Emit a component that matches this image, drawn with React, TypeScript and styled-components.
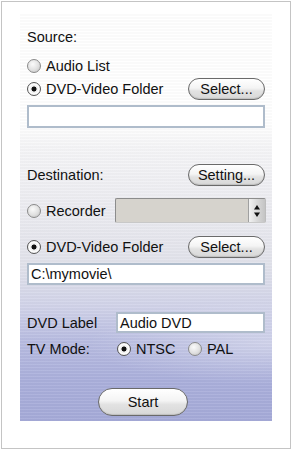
import React from "react";
import styled, { createGlobalStyle } from "styled-components";

const Global = createGlobalStyle`
  html, body { margin: 0; padding: 0; background: #fff; }
  body { font-family: "Liberation Sans", Arial, sans-serif; }
`;

const Outer = styled.div`
  width: 292px;
  height: 451px;
  padding: 1px;
  box-sizing: border-box;
`;

const Frame = styled.div`
  width: 290px;
  height: 448px;
  box-sizing: border-box;
  border: 1px solid #c4c4c4;
  padding: 11px 0 0 18px;
`;

const Panel = styled.div`
  width: 252px;
  height: 408px;
  box-sizing: border-box;
  padding: 16px 7px 0 7px;
  display: flex;
  flex-direction: column;
  background:
    repeating-linear-gradient(180deg, rgba(255,255,255,0.08) 0 1px, rgba(0,0,0,0.02) 1px 3px),
    radial-gradient(ellipse 260px 60px at 250px 330px, rgba(255,255,255,0.35), rgba(255,255,255,0) 70%),
    linear-gradient(180deg, #ffffff 0%, #ffffff 27%, #f5f5f7 33%, #ececf1 48%, #e1e2eb 62%, #d1d3e9 72%, #b9bde1 80%, #aaafdb 90%, #a5aad8 100%);
`;

const Row = styled.div<{ $mt: number; $h: number }>`
  display: flex;
  align-items: center;
  margin-top: ${(p) => p.$mt}px;
  height: ${(p) => p.$h}px;
  font-size: 14.5px;
  color: #111;
  white-space: nowrap;
`;

const Label = styled.span<{ $w?: number }>`
  ${(p) => (p.$w ? `width: ${p.$w}px;` : "")}
  flex: ${(p) => (p.$w ? "none" : "1")};
`;

const RadioWrap = styled.label<{ $w?: number }>`
  display: flex;
  align-items: center;
  gap: 5px;
  ${(p) => (p.$w ? `width: ${p.$w}px; flex: none;` : "flex: 1;")}
`;

const Dot = styled.span<{ $on?: boolean }>`
  width: 12px;
  height: 12px;
  border-radius: 50%;
  border: 1px solid ${(p) => (p.$on ? "#555" : "#8a8a8a")};
  background: ${(p) =>
    p.$on
      ? "radial-gradient(circle at 50% 50%, #111 0 2.2px, #e8e8e8 2.8px, #ffffff 5px, #d0d0d0 100%)"
      : "radial-gradient(circle at 40% 35%, #fafafa 0%, #e0e0e0 55%, #bdbdbd 100%)"};
  flex: none;
`;

const Button = styled.button<{ $w: number; $h: number }>`
  width: ${(p) => p.$w}px;
  height: ${(p) => p.$h}px;
  border: 1px solid #6a6a6a;
  border-radius: ${(p) => p.$h / 2}px;
  background: linear-gradient(180deg, #ffffff 0%, #f4f4f4 45%, #e2e2e2 60%, #d8d8d8 100%);
  box-shadow: inset 0 -1px 1px rgba(0,0,0,0.12);
  font-family: "Liberation Sans", Arial, sans-serif;
  font-size: 14.5px;
  color: #111;
  padding: 0;
  flex: none;
`;

const TextBox = styled.div<{ $w: number; $h: number }>`
  width: ${(p) => p.$w}px;
  height: ${(p) => p.$h}px;
  box-sizing: border-box;
  border: 2px solid #afbccb;
  background: #fff;
  font-size: 14.5px;
  padding-left: 2px;
  display: flex;
  align-items: center;
  color: #111;
  flex: none;
`;

const Combo = styled.div`
  width: 151px;
  height: 25px;
  box-sizing: border-box;
  border: 1px solid #8c8c8c;
  border-right-color: #bdbdbd;
  border-bottom-color: #c8c8c8;
  background: #d6d3cd;
  display: flex;
  justify-content: flex-end;
  border-radius: 2px;
  flex: none;
`;

const Spin = styled.div`
  width: 16px;
  height: 100%;
  background: linear-gradient(90deg, #f2f2f2, #d9d9d9 50%, #c4c4c4);
  border-left: 1px solid #a0a0a0;
  display: flex;
  align-items: center;
  justify-content: center;
`;

const StartRow = styled(Row)`
  padding-left: 71px;
`;

export default function App() {
  return (
    <Outer>
      <Global />
      <Frame>
        <Panel>
          <Row $mt={0} $h={16}>
            <Label>Source:</Label>
          </Row>
          <Row $mt={13} $h={16}>
            <RadioWrap>
              <Dot />
              Audio List
            </RadioWrap>
          </Row>
          <Row $mt={4} $h={22}>
            <RadioWrap>
              <Dot $on />
              DVD-Video Folder
            </RadioWrap>
            <Button $w={77} $h={22}>Select...</Button>
          </Row>
          <Row $mt={5} $h={23}>
            <TextBox $w={238} $h={23} />
          </Row>
          <Row $mt={36} $h={22}>
            <Label>Destination:</Label>
            <Button $w={77} $h={22}>Setting...</Button>
          </Row>
          <Row $mt={12} $h={25}>
            <RadioWrap $w={88}>
              <Dot />
              Recorder
            </RadioWrap>
            <Combo>
              <Spin>
                <svg width="8" height="14" viewBox="0 0 8 14">
                  <path d="M4 1 L7 5.5 L1 5.5 Z" fill="#111" />
                  <path d="M4 13 L7 8.5 L1 8.5 Z" fill="#111" />
                </svg>
              </Spin>
            </Combo>
          </Row>
          <Row $mt={13} $h={22}>
            <RadioWrap>
              <Dot $on />
              DVD-Video Folder
            </RadioWrap>
            <Button $w={77} $h={22}>Select...</Button>
          </Row>
          <Row $mt={5} $h={22}>
            <TextBox $w={238} $h={22}>C:\mymovie\</TextBox>
          </Row>
          <Row $mt={27} $h={21}>
            <Label $w={89}>DVD Label</Label>
            <TextBox $w={149} $h={21}>Audio DVD</TextBox>
          </Row>
          <Row $mt={8} $h={16}>
            <Label $w={90}>TV Mode:</Label>
            <RadioWrap $w={71}>
              <Dot $on />
              NTSC
            </RadioWrap>
            <RadioWrap>
              <Dot />
              PAL
            </RadioWrap>
          </Row>
          <StartRow $mt={31} $h={28}>
            <Button $w={90} $h={28}>Start</Button>
          </StartRow>
        </Panel>
      </Frame>
    </Outer>
  );
}
